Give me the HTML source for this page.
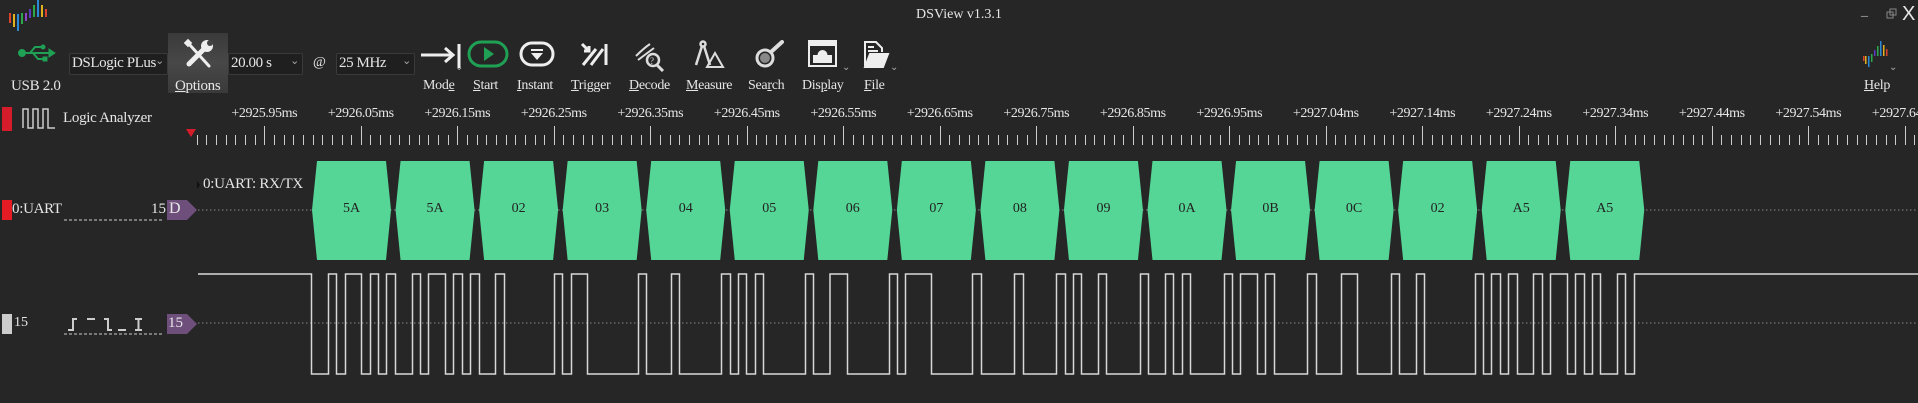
<!DOCTYPE html>
<html><head><meta charset="utf-8"><style>
*{margin:0;padding:0;box-sizing:border-box}
body{width:1918px;height:403px;background:#262626;overflow:hidden;position:relative;font-family:"Liberation Serif","Noto Serif CJK SC",serif;color:#e6e6e6}
.a{position:absolute;white-space:nowrap}
.lbl{font-size:14px;top:78px;letter-spacing:-0.3px}
.combo{position:absolute;top:53px;height:22px;background:#1f1f1f;border:1px solid #3a3a3a;border-radius:2px;font-size:15px;padding:1px 2px;letter-spacing:-0.4px}
.combo i{position:absolute;right:3px;top:0;font-style:normal;font-size:11px;color:#aaa}
.rl{position:absolute;top:106px;font-size:14px;letter-spacing:-0.4px;transform:translateX(-50%)}
u{text-decoration:underline}
</style></head><body>
<svg class="a" style="left:8px;top:0" width="42" height="33">
<rect x="1" y="13" width="2" height="10" fill="#d9442c"/><rect x="5" y="14" width="2" height="13" fill="#e0b020"/><rect x="9" y="14" width="2" height="17" fill="#2a8ad8"/><rect x="13" y="13" width="2" height="11" fill="#2aa84a"/><rect x="17" y="13" width="2" height="8" fill="#8a48c8"/><rect x="21" y="9" width="2" height="9" fill="#5a3ac0"/><rect x="25" y="5" width="2" height="12" fill="#2aa84a"/><rect x="29" y="0" width="2" height="17" fill="#2a8ad8"/><rect x="33" y="5" width="2" height="12" fill="#e0b020"/><rect x="37" y="9" width="2" height="8" fill="#d9442c"/>
</svg>
<div class="a" style="left:0;width:1918px;top:7px;text-align:center;font-size:14px">DSView v1.3.1</div>
<div class="a" style="left:1861px;top:4px;font-size:14px;color:#bbb">_</div>
<svg class="a" style="left:1886px;top:8px" width="12" height="12"><rect x="1" y="4" width="6" height="6" fill="none" stroke="#888"/><rect x="4" y="1" width="6" height="6" fill="none" stroke="#888"/></svg>
<div class="a" style="left:1902px;top:3px;font-size:20px;font-family:'Liberation Sans',sans-serif">X</div>

<svg class="a" style="left:18px;top:44px" width="38" height="18" fill="#1fa055" stroke="#1fa055">
<circle cx="4" cy="9" r="3.5"/><line x1="4" y1="9" x2="32" y2="9" stroke-width="2"/><polygon points="31,5 37,9 31,13" /><path d="M12 9 L17 3 H24" fill="none" stroke-width="2"/><circle cx="25" cy="3" r="2"/><path d="M15 9 L20 15 H26" fill="none" stroke-width="2"/><rect x="25" y="13" width="4" height="4"/></svg>
<div class="a lbl" style="left:11px;font-size:15px">USB 2.0</div>
<div class="combo" style="left:69px;width:99px">DSLogic PLus<i>⌄</i></div>
<div class="a" style="left:168px;top:33px;width:60px;height:60px;background:linear-gradient(#3a3a3a,#484848 50%,#3a3a3a)"></div>
<svg class="a" style="left:183px;top:38px" width="32" height="32" stroke="#eee" stroke-linecap="round"><line x1="6" y1="26" x2="24" y2="8" stroke-width="5"/><circle cx="24" cy="8" r="6" fill="#eee" stroke="none"/><circle cx="27" cy="5" r="3" fill="#444" stroke="none"/><line x1="6" y1="6" x2="26" y2="28" stroke-width="3"/><rect x="2" y="2" width="6" height="6" fill="#eee" stroke="none" transform="rotate(45 5 5)"/></svg>
<div class="a lbl" style="left:175px;font-size:15px"><u>O</u>ptions</div>
<div class="combo" style="left:228px;width:75px">20.00 s<i>⌄</i></div>
<div class="a" style="left:313px;top:55px;font-size:14px">@</div>
<div class="combo" style="left:336px;width:79px">25 MHz<i>⌄</i></div>

<svg class="a" style="left:419px;top:42px" width="45" height="32" stroke="#eee" stroke-width="3" fill="none"><line x1="2" y1="13" x2="34" y2="13"/><path d="M26 6 L34 13 L26 20"/><line x1="40" y1="2" x2="40" y2="26"/></svg>
<div class="a" style="left:455px;top:62px;font-size:10px;color:#aaa">⌄</div>
<div class="a lbl" style="left:423px"><span>Mod</span><u>e</u></div>
<svg class="a" style="left:467px;top:40px" width="42" height="28"><rect x="2" y="2" width="38" height="24" rx="12" fill="none" stroke="#1fa055" stroke-width="3"/><polygon points="17,7 27,14 17,21" fill="#1fa055"/></svg>
<div class="a lbl" style="left:473px"><u>S</u>tart</div>
<svg class="a" style="left:519px;top:41px" width="36" height="26"><rect x="2" y="2" width="32" height="22" rx="11" fill="none" stroke="#eee" stroke-width="3"/><rect x="12" y="8" width="12" height="2" fill="#eee"/><polygon points="12,12 24,12 18,19" fill="#eee"/></svg>
<div class="a lbl" style="left:517px"><u>I</u>nstant</div>
<svg class="a" style="left:579px;top:41px" width="30" height="28" stroke="#eee" stroke-width="3" fill="none"><path d="M3 3 L10 10 M5 10 H10 V5"/><line x1="4" y1="24" x2="17" y2="8"/><line x1="12" y1="24" x2="24" y2="8"/><line x1="27" y1="3" x2="27" y2="24"/></svg>
<div class="a lbl" style="left:571px"><u>T</u>rigger</div>
<svg class="a" style="left:634px;top:40px" width="32" height="32" stroke="#ddd" fill="none" stroke-width="2"><path d="M2 16 Q10 8 16 4 M4 20 Q12 14 20 8"/><circle cx="19" cy="20" r="6" stroke-width="2.5"/><line x1="23" y1="25" x2="29" y2="31" stroke-width="3"/><text x="16" y="24" font-size="9" fill="#ddd" stroke="none">?</text></svg>
<div class="a lbl" style="left:629px"><u>D</u>ecode</div>
<svg class="a" style="left:693px;top:39px" width="32" height="32" stroke="#ddd" fill="none" stroke-width="2.5"><circle cx="10" cy="5" r="2.5"/><line x1="9" y1="7" x2="3" y2="26"/><line x1="11" y1="7" x2="17" y2="26"/><path d="M14 28 L30 28 L22 14 Z" stroke-width="2"/></svg>
<div class="a lbl" style="left:686px"><u>M</u>easure</div>
<svg class="a" style="left:752px;top:40px" width="34" height="32" stroke="#ddd" fill="none"><circle cx="13" cy="18" r="8" stroke-width="3"/><circle cx="13" cy="18" r="5" fill="#888" stroke="none"/><line x1="19" y1="12" x2="30" y2="2" stroke-width="4" stroke-linecap="round"/></svg>
<div class="a lbl" style="left:748px">Sea<u>r</u>ch</div>
<svg class="a" style="left:808px;top:40px" width="30" height="30"><rect x="1" y="1" width="27" height="25" fill="none" stroke="#eee" stroke-width="2"/><rect x="1" y="1" width="27" height="5" fill="#eee"/><rect x="5" y="15" width="19" height="8" fill="#eee"/><circle cx="14.5" cy="15" r="5" fill="#eee"/></svg>
<div class="a" style="left:842px;top:62px;font-size:10px;color:#aaa">⌄</div>
<div class="a lbl" style="left:802px">Dis<u>p</u>lay</div>
<svg class="a" style="left:862px;top:40px" width="28" height="30" stroke="#eee" fill="none" stroke-width="2"><path d="M3 26 V2 H14 L20 8 V12"/><path d="M6 7 H12 M6 11 H16"/><path d="M3 27 L8 14 H26 L21 27 Z" fill="#eee"/></svg>
<div class="a" style="left:890px;top:62px;font-size:10px;color:#aaa">⌄</div>
<div class="a lbl" style="left:864px"><u>F</u>ile</div>
<svg class="a" style="left:1862px;top:40px" width="34" height="28">
<rect x="1" y="16" width="1.5" height="5" fill="#d9442c"/><rect x="3" y="16" width="1.5" height="8" fill="#e0b020"/><rect x="6" y="16" width="1.5" height="11" fill="#2a8ad8"/><rect x="9" y="14" width="1.5" height="8" fill="#2aa84a"/><rect x="12" y="10" width="1.5" height="6" fill="#5a3ac0"/><rect x="15" y="6" width="1.5" height="10" fill="#2aa84a"/><rect x="18" y="1" width="1.5" height="15" fill="#2a8ad8"/><rect x="21" y="5" width="1.5" height="11" fill="#e0b020"/><rect x="24" y="9" width="1.5" height="7" fill="#d9442c"/></svg>
<div class="a" style="left:1889px;top:62px;font-size:10px;color:#aaa">⌄</div>
<div class="a lbl" style="left:1864px"><u>H</u>elp</div>

<div class="a" style="left:2px;top:107px;width:10px;height:24px;background:#d51c2a"></div>
<svg class="a" style="left:22px;top:108px" width="34" height="21" stroke="#ccc" fill="none" stroke-width="1.5"><path d="M1 20 V1 H6 V20 H11 V1 H16 V20 H21 V1 H26 V20 H33"/></svg>
<div class="a" style="left:63px;top:110px;font-size:15px;letter-spacing:-0.3px">Logic Analyzer</div>

<svg class="a" style="left:0;top:0" width="1918" height="403">
<polygon points="186,129 196,129 191,137" fill="#d51c2a"/>
<g id="ticks" stroke="#ccc" stroke-width="1"></g>
<line x1="198" y1="210" x2="1918" y2="210" stroke="#888" stroke-dasharray="1.5 2.5"/>
<line x1="198" y1="323" x2="1918" y2="323" stroke="#888" stroke-dasharray="1.5 2.5"/>
<g id="blocks" fill="#55d696"></g>
<path d="M198 274 H311.5 V374 H328.5 V274 H336.5 V374 H345.5 V274 H361.5 V374 H370.5 V274 H378.5 V374 H386.5 V274 H395.5 V374 H412.5 V274 H420.5 V374 H428.5 V274 H445.5 V374 H453.5 V274 H462.5 V374 H470.5 V274 H479.5 V374 H495.5 V274 H504.5 V374 H554.5 V274 H562.5 V374 H571.5 V274 H587.5 V374 H638.5 V274 H646.5 V374 H671.5 V274 H679.5 V374 H721.5 V274 H730.5 V374 H738.5 V274 H746.5 V374 H755.5 V274 H763.5 V374 H805.5 V274 H813.5 V374 H830 V274 H847.5 V374 H889.5 V274 H897.5 V374 H905.5 V274 H931.5 V374 H972.5 V274 H981.5 V374 H1014.5 V274 H1023.5 V374 H1056.5 V274 H1065.5 V374 H1073.5 V274 H1081.5 V374 H1098.5 V274 H1106.5 V374 H1140.5 V274 H1148.5 V374 H1165.5 V274 H1173.5 V374 H1182.5 V274 H1190.5 V374 H1224.5 V274 H1232.5 V374 H1240.5 V274 H1257.5 V374 H1265.5 V274 H1274.5 V374 H1307.5 V274 H1316.5 V374 H1341.5 V274 H1357.5 V374 H1391.5 V274 H1399.5 V374 H1416.5 V274 H1424.5 V374 H1475.5 V274 H1483.5 V374 H1491.5 V274 H1500.5 V374 H1508.5 V274 H1517.5 V374 H1533.5 V274 H1542.5 V374 H1550.5 V274 H1567.5 V374 H1575.5 V274 H1584.5 V374 H1592.5 V274 H1600.5 V374 H1617.5 V274 H1625.5 V374 H1634.5 V274 H1918" fill="none" stroke="#d8d8d8" stroke-width="1.5"/>
<polygon points="167,200 187,200 197,210 187,220 167,220" fill="#6e4f7c"/>
<polygon points="167,314 187,314 197,324 187,334 167,334" fill="#6e4f7c"/>
<polygon points="197,181 200,185 197,189" fill="#111"/>
<line x1="64" y1="220" x2="164" y2="220" stroke="#ccc" stroke-dasharray="3 2"/>
<line x1="64" y1="334" x2="164" y2="334" stroke="#ccc" stroke-dasharray="3 2"/>
<path d="M68 330 H73 V319 H77 M87 319 H95 M104 319 H108 V330 H112 M118 330 H126 M135 319 H142 M135 330 H142 M138.5 319 V330" fill="none" stroke="#ccc" stroke-width="2"/>
</svg>
<div class="a" style="left:2px;top:200px;width:10px;height:20px;background:#e51c24"></div>
<div class="a" style="left:12px;top:201px;font-size:15px;letter-spacing:-0.3px">0:UART</div>
<div class="a" style="left:151px;top:201px;font-size:15px">15</div>
<div class="a" style="left:169px;top:200px;font-size:16px">D</div>
<div class="a" style="left:2px;top:314px;width:10px;height:20px;background:#ccc"></div>
<div class="a" style="left:14px;top:315px;font-size:14px">15</div>
<div class="a" style="left:168px;top:315px;font-size:15px">15</div>
<div class="a" style="left:203px;top:176px;font-size:15px;letter-spacing:-0.3px">0:UART: RX/TX</div>
<div id="rl"></div>
<div id="bl"></div>
<script>
var t='',labs=['2925.95','2926.05','2926.15','2926.25','2926.35','2926.45','2926.55','2926.65','2926.75','2926.85','2926.95','2927.04','2927.14','2927.24','2927.34','2927.44','2927.54','2927.64'];
for(var i=-7;i<190;i++){var x=264.3+9.65*i;if(x<196||x>1918)continue;var m=(i%10===0);x=Math.round(x)+0.5;t+='<line x1="'+x+'" x2="'+x+'" y1="'+(m?126:135)+'" y2="145"/>';}
document.getElementById('ticks').innerHTML=t;
var h='';labs.forEach(function(l,i){h+='<div class="rl" style="left:'+(264.3+96.5*i)+'px">+'+l+'ms</div>';});
document.getElementById('rl').innerHTML=h;
var b='',bh='',v=['5A','5A','02','03','04','05','06','07','08','09','0A','0B','0C','02','A5','A5'];
v.forEach(function(s,k){var x=312+83.55*k;b+='<polygon points="'+(x+5)+',161 '+(x+74)+',161 '+(x+79)+',210 '+(x+74)+',260 '+(x+5)+',260 '+x+',210"/>';
bh+='<div class="a" style="left:'+x+'px;width:79px;top:201px;text-align:center;font-size:14px;color:#222">'+s+'</div>';});
document.getElementById('blocks').innerHTML=b;document.getElementById('bl').innerHTML=bh;
</script>
</body></html>
